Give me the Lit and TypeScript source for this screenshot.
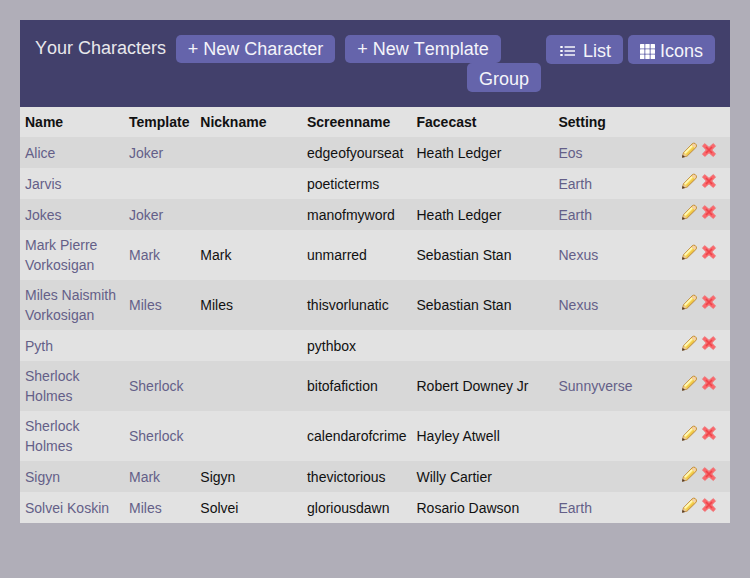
import { LitElement, html, css, svg, nothing } from "lit";
import { customElement } from "lit/decorators.js";
import { classMap } from "lit/directives/class-map.js";

interface Character {
  name: string;
  template?: string;
  nickname?: string;
  screenname: string;
  facecast?: string;
  setting?: string;
  tall?: boolean;
}

const characters: Character[] = [
  { name: "Alice", template: "Joker", screenname: "edgeofyourseat", facecast: "Heath Ledger", setting: "Eos" },
  { name: "Jarvis", screenname: "poeticterms", setting: "Earth" },
  { name: "Jokes", template: "Joker", screenname: "manofmyword", facecast: "Heath Ledger", setting: "Earth" },
  { name: "Mark Pierre Vorkosigan", template: "Mark", nickname: "Mark", screenname: "unmarred", facecast: "Sebastian Stan", setting: "Nexus", tall: true },
  { name: "Miles Naismith Vorkosigan", template: "Miles", nickname: "Miles", screenname: "thisvorlunatic", facecast: "Sebastian Stan", setting: "Nexus", tall: true },
  { name: "Pyth", screenname: "pythbox" },
  { name: "Sherlock Holmes", template: "Sherlock", screenname: "bitofafiction", facecast: "Robert Downey Jr", setting: "Sunnyverse", tall: true },
  { name: "Sherlock Holmes", template: "Sherlock", screenname: "calendarofcrime", facecast: "Hayley Atwell", tall: true },
  { name: "Sigyn", template: "Mark", nickname: "Sigyn", screenname: "thevictorious", facecast: "Willy Cartier" },
  { name: "Solvei Koskin", template: "Miles", nickname: "Solvei", screenname: "gloriousdawn", facecast: "Rosario Dawson", setting: "Earth" },
];

const pencil = html`<svg class="icon" viewBox="0 0 16 16">
  <path d="M1.5 15.1 2.4 10.9 10.9 2.1Q12.6 .6 14 1.4L15.1 2.6Q16 4.2 14.8 5.6L6.2 14Z" fill="#f8d95e" stroke="#bd873c" stroke-width="1"/>
  <path d="M3.8 11.2 11 3.9" stroke="#fffab8" stroke-width="1.8"/>
  <path d="M5.6 12.9 13 5.7" stroke="#e8b934" stroke-width="1"/>
  <path d="M11 2.9 12.3 1.8Q13.4 1.3 14.5 2.8Q15.2 4 14.3 5L13.4 5.8Z" fill="#f3cfae"/>
  <path d="M2.8 11.3 5.8 13.7 2 14.8Z" fill="#e8c69b"/>
  <path d="M1 15.8 1.6 12.8 4.1 14.9Z" fill="#533b2b"/>
</svg>`;

const cross = html`<svg class="icon" viewBox="0 0 16 16">
  <path d="M3.8 1.7 8 5.4 12.2 1.7 14.5 3.9 10.7 8 14.5 12.1 12.2 14.4 8 10.7 3.8 14.4 1.5 12.1 5.3 8 1.5 3.9Z" fill="#fb666a" stroke="#f07074" stroke-width="1" stroke-linejoin="round"/>
  <path d="M5 5 11 11M11 5 5 11" stroke="#ee444a" stroke-width="1.6"/>
</svg>`;

const listIcon = html`<svg class="list-icon" viewBox="0 0 16 10">
  ${[0, 4, 8].map((y) => svg`<rect x="0.3" y=${y} width="2.4" height="2" fill="#fff"/><rect x="4.5" y=${y + 0.3} width="10.5" height="1.4" fill="#fff"/>`)}
</svg>`;

const gridIcon = html`<svg class="grid-icon" viewBox="0 0 15 15">
  ${[0, 5.3, 10.6].map((y) => [0, 5.3, 10.6].map((x) => svg`<rect x=${x} y=${y} width="4.4" height="4.4" rx=".5" fill="#fff"/>`))}
</svg>`;

@customElement("app-root")
export class AppRoot extends LitElement {
  static styles = css`
    :host {
      display: block;
      box-sizing: border-box;
      min-height: 578px;
      padding: 20px;
      background: #b0aeb8;
      color: #111;
      font: 14px/20px "Liberation Sans", Arial, sans-serif;
    }
    .bar {
      display: flex;
      align-items: flex-start;
      box-sizing: border-box;
      height: 87px;
      padding: 15px;
      background: #42406b;
      color: #e8e8ec;
      font-size: 18px;
      font-kerning: none;
      white-space: nowrap;
    }
    .create {
      display: flex;
      flex: none;
      gap: 10px;
    }
    .title {
      width: 131px;
      line-height: 26px;
    }
    .views {
      display: flex;
      flex: none;
      gap: 5px;
      margin-left: -34px;
    }
    .button {
      display: flex;
      align-items: center;
      justify-content: center;
      box-sizing: border-box;
      height: 28px;
      border-radius: 5px;
      background: #6564ab;
      color: #f4f4fa;
    }
    .views .button {
      height: 29px;
      padding-top: 2px;
    }
    .character { width: 159px; }
    .template { width: 156px; }
    .group { width: 74px; margin-top: 28px; }
    .views .list { width: 77px; padding-left: 2px; }
    .icons { width: 87px; }
    .list-icon {
      width: 16px;
      height: 10px;
      margin-right: 7px;
    }
    .grid-icon {
      width: 15px;
      height: 15px;
      margin: 2px 5px 0 0;
    }
    table {
      width: 710px;
      border-collapse: collapse;
      table-layout: fixed;
    }
    th, td {
      box-sizing: border-box;
      padding: 0 5px;
      text-align: left;
      vertical-align: middle;
    }
    th { height: 30px; }
    td { height: 31px; }
    .tall td { height: 50px; }
    tr { background: #e2e2e2; }
    tbody tr:nth-child(odd) { background: #d8d8d8; }
    .c-name { width: 104px; }
    .c-template { width: 71.3px; }
    .c-nickname { width: 106.7px; }
    .c-screen { width: 109.5px; }
    .c-face { width: 142px; }
    .c-setting { width: 96.5px; }
    .link { color: #645f88; }
    .actions {
      display: flex;
      justify-content: flex-end;
      gap: 4px;
      padding: 0 8px 5px 0;
    }
    .tall .actions { padding-bottom: 6px; }
    .icon {
      flex: none;
      width: 16px;
      height: 16px;
      fill: none;
    }
  `;

  private row(c: Character) {
    return html`<tr class=${classMap({ tall: !!c.tall })}>
      <td class="link">${c.name}</td>
      <td class="link">${c.template ?? nothing}</td>
      <td>${c.nickname ?? nothing}</td>
      <td>${c.screenname}</td>
      <td>${c.facecast ?? nothing}</td>
      <td class="link">${c.setting ?? nothing}</td>
      <td><div class="actions">${pencil}${cross}</div></td>
    </tr>`;
  }

  render() {
    return html`
      <div class="bar">
        <div class="create">
          <div class="title">Your Characters</div>
          <div class="button character">+ New Character</div>
          <div class="button template">+ New Template</div>
        </div>
        <div class="views">
          <div class="button group">Group</div>
          <div class="button list">${listIcon}List</div>
          <div class="button icons">${gridIcon}Icons</div>
        </div>
      </div>
      <table>
        <thead>
          <tr>
            <th class="c-name">Name</th>
            <th class="c-template">Template</th>
            <th class="c-nickname">Nickname</th>
            <th class="c-screen">Screenname</th>
            <th class="c-face">Facecast</th>
            <th class="c-setting">Setting</th>
            <th></th>
          </tr>
        </thead>
        <tbody>${characters.map((c) => this.row(c))}</tbody>
      </table>
    `;
  }
}
